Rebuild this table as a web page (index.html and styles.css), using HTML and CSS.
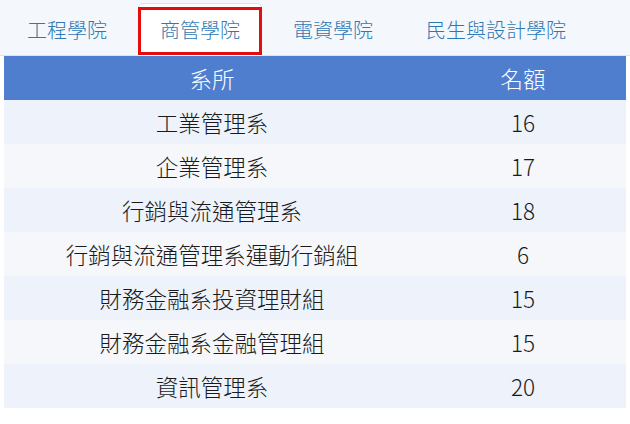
FILE: index.html
```html
<!DOCTYPE html>
<html lang="zh-Hant">
<head>
<meta charset="utf-8">
<title>商管學院</title>
<link rel="stylesheet" href="styles.css">
</head>
<body>
<nav class="tabs">
  <a class="tab">工程學院</a>
  <a class="tab active">商管學院</a>
  <a class="tab">電資學院</a>
  <a class="tab">民生與設計學院</a>
</nav>
<table class="quota">
  <thead>
    <tr><th class="col-dept">系所</th><th class="col-num">名額</th></tr>
  </thead>
  <tbody>
    <tr><td>工業管理系</td><td>16</td></tr>
    <tr><td>企業管理系</td><td>17</td></tr>
    <tr><td>行銷與流通管理系</td><td>18</td></tr>
    <tr><td>行銷與流通管理系運動行銷組</td><td>6</td></tr>
    <tr><td>財務金融系投資理財組</td><td>15</td></tr>
    <tr><td>財務金融系金融管理組</td><td>15</td></tr>
    <tr><td>資訊管理系</td><td>20</td></tr>
  </tbody>
</table>
</body>
</html>
```
FILE: styles.css
```css
html, body {
  margin: 0;
  padding: 0;
  background: #ffffff;
}
body {
  font-family: "Noto Sans CJK TC", "Noto Sans", sans-serif;
  font-weight: 300;
}
.tabs {
  display: flex;
  gap: 9px;
  height: 55px;
  padding: 0 0 0 5px;
  background: #f4f7fb;
  border-bottom: 1px solid #dbe4f0;
  box-sizing: content-box;
  align-items: flex-end;
}
.tab {
  position: relative;
  display: flex;
  align-items: center;
  justify-content: center;
  height: 51px;
  padding: 0 21px;
  margin-bottom: -1px;
  font-size: 20px;
  color: #2f78b4;
  border: 1px solid transparent;
  border-radius: 5px 5px 0 0;
  text-decoration: none;
  cursor: pointer;
}
.tab.active {
  background: #ffffff;
  border-color: #dee2e6 #dee2e6 #ffffff;
}
.tab.active::after {
  content: "";
  position: absolute;
  left: -1px;
  right: -1px;
  top: 3px;
  bottom: 0;
  border: 3px solid #e40c0c;
}
.quota {
  margin: 0 4px;
  width: 622px;
  border-collapse: collapse;
  font-size: 22.5px;
}
.quota th, .quota td {
  height: 44px;
  padding: 0;
  text-align: center;
  font-weight: 300;
}
.quota th {
  background: #507ecf;
  color: #ffffff;
}
.col-dept { width: 416px; }
.quota td { color: #1a1a1a; }
.quota tbody tr:nth-child(odd) { background: #edf2fb; }
.quota tbody tr:nth-child(even) { background: #f5f7fa; }
```
